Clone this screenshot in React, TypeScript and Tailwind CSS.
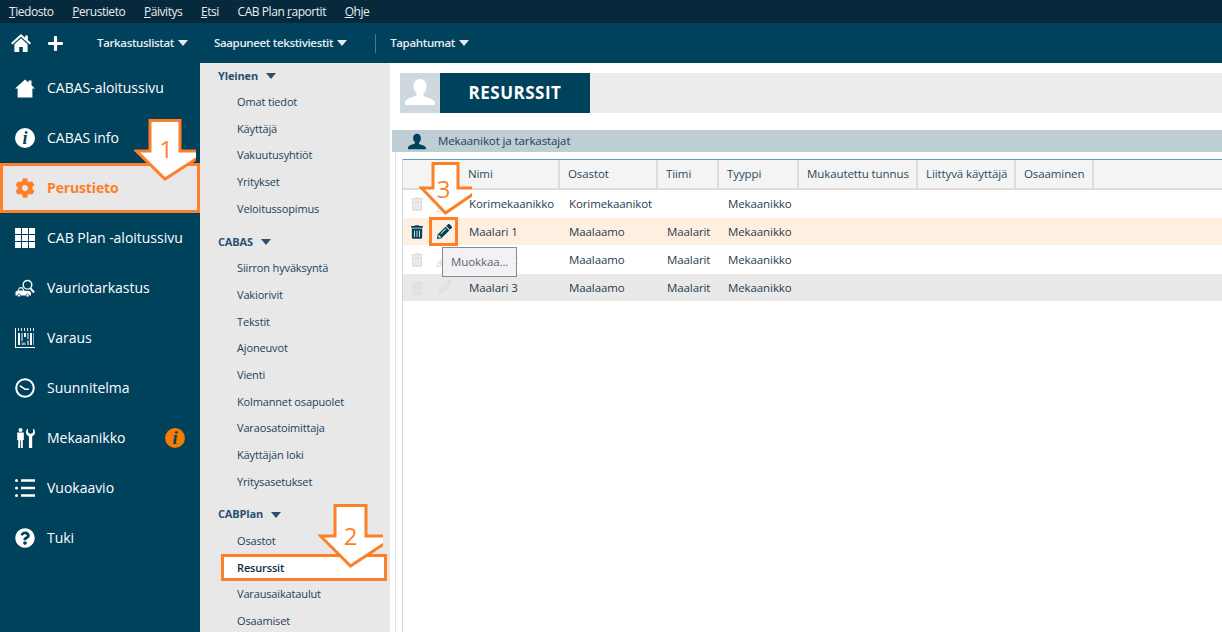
import React from "react";
import { FaPlus, FaCog, FaQuestionCircle, FaTrashAlt, FaPencilAlt } from "react-icons/fa";

const Caret = ({ className = "" }: { className?: string }) => (
  <svg viewBox="0 0 10 6" className={`w-[10px] h-[6px] ${className}`} fill="currentColor"><path d="M0 0h10L5 6z" /></svg>
);

const HomeRoof = ({ className = "" }: { className?: string }) => (
  <svg viewBox="0 0 20 18" className={className} fill="currentColor">
    <path d="M10 0 20 9l-1.300 1.500L10 2.800 1.300 10.500 0 9l3.200-2.900V1.500h2.600v2.300z" transform="matrix(-1 0 0 1 20 0)" />
    <path d="M10 4.300 3.400 10.200V18h4.800v-5h3.600v5h4.800v-7.800z" />
  </svg>
);

const HomeSolid = ({ className = "" }: { className?: string }) => (
  <svg viewBox="0 0 20 18" className={className} fill="currentColor">
    <path d="M10 0 13.500 3V1h3v4.800L20 9h-2.600v9H2.600V9H0z" />
  </svg>
);

const UserShape = ({ className = "" }: { className?: string }) => (
  <svg viewBox="0 0 30 26" className={className} fill="currentColor">
    <path d="M15 0c4 0 6.500 3 6.500 7.500 0 3-1.300 5.500-3 7v2.500c3 1.500 11.500 3 11.500 7V26H0v-2.500c0-4 8.500-5.500 11.500-7v-2.500c-1.700-1.500-3-4-3-7C8.500 3 11 0 15 0z" />
  </svg>
);

const Grid3 = () => (
  <svg viewBox="0 0 20 20" className="h-5 w-5" fill="currentColor">
    <path d="M0 0h6v6H0zM7 0h6v6H7zM14 0h6v6h-6zM0 7h6v6H0zM7 7h6v6H7zM14 7h6v6h-6zM0 14h6v6H0zM7 14h6v6H7zM14 14h6v6h-6z" />
  </svg>
);

const InfoDot = ({ bg, fg }: { bg: string; fg: string }) => (
  <span className={`flex h-5 w-5 items-center justify-center rounded-full ${bg} ${fg} font-['Liberation_Serif',serif] text-[18px] font-bold italic leading-none`}>i</span>
);

const Car = () => (
  <svg viewBox="0 0 20 20" className="h-5 w-5" fill="none" stroke="currentColor">
    <circle cx="12.500" cy="6.800" r="4.300" strokeWidth="1.400" />
    <path d="M15.500 10.300l3.600 4.200" strokeWidth="2" />
    <path d="M0.500 17.500v-3.800l2-1 1.800-3.500h3.400l1.700 3.500 5 .4 1.600 1.400v3z" fill="currentColor" stroke="none" />
    <path d="M4.700 10.500h2.400l1 2H3.700z" fill="#00415c" stroke="none" />
    <circle cx="4" cy="17.500" r="1.500" fill="currentColor" stroke="#00415c" strokeWidth=".6" />
    <circle cx="12.500" cy="17.500" r="1.500" fill="currentColor" stroke="#00415c" strokeWidth=".6" />
  </svg>
);

const Barcode = () => (
  <svg viewBox="0 0 20 20" className="h-5 w-5" fill="currentColor">
    <path d="M0 0h1v19h19v1H0z" />
    <path d="M3 0h1v3H3zM6 0h1v3H6zM9 0h1v3H9zM12 0h1v3h-1zM15 0h1v3h-1zM18 0h1v3h-1z" opacity=".9" />
    <path d="M3 5h2v12H3zM6.500 5h1v8h-1zM9 5h2v4H9zM12.500 5h1v6h-1zM15 5h2v12h-2z" />
    <path d="M6.500 14.500h4v2.500h-4zM12 12.500h2v4.500h-2zM18 5h1v12h-1z" opacity=".55" />
  </svg>
);

const Clock = () => (
  <svg viewBox="0 0 20 20" className="h-5 w-5" fill="none" stroke="currentColor" strokeWidth="2">
    <circle cx="10" cy="10" r="8.800" />
    <path d="M4.800 7.600 10 11.200h4" strokeWidth="1.600" />
  </svg>
);

const Mech = () => (
  <svg viewBox="0 0 20 20" className="h-5 w-5" fill="currentColor">
    <circle cx="5.500" cy="2" r="2" />
    <path d="M2.200 4.600h6.600v7.400H7.800v8H5.900v-7.400h-.8V20H3.200v-8h-1z" />
    <path d="M13 .5v4l2.500 1.500L18 4.500v-4c1.300.8 2 2.200 2 3.800 0 1.800-1 3.300-2.800 4V19a1.500 1.500 0 0 1-3.300 0V8.300C12 7.600 11 6.100 11 4.300c0-1.600.7-3 2-3.800z" />
  </svg>
);

const ListIcon = () => (
  <svg viewBox="0 0 20 20" className="h-5 w-5" fill="currentColor">
    <circle cx="1.500" cy="2.500" r="1.500" /><circle cx="1.500" cy="10" r="1.500" /><circle cx="1.500" cy="17.500" r="1.500" />
    <path d="M6 1.300h14v2.400H6zM6 8.800h14v2.400H6zM6 16.300h14v2.400H6z" />
  </svg>
);

const navItems: { label: string; icon: React.ReactNode; active?: boolean; badge?: boolean }[] = [
  { label: "CABAS-aloitussivu", icon: <HomeSolid className="h-[19px] w-5" /> },
  { label: "CABAS info", icon: <InfoDot bg="bg-white" fg="text-[#00415c]" /> },
  { label: "Perustieto", icon: <FaCog className="h-5 w-5" />, active: true },
  { label: "CAB Plan -aloitussivu", icon: <Grid3 /> },
  { label: "Vauriotarkastus", icon: <Car /> },
  { label: "Varaus", icon: <Barcode /> },
  { label: "Suunnitelma", icon: <Clock /> },
  { label: "Mekaanikko", icon: <Mech />, badge: true },
  { label: "Vuokaavio", icon: <ListIcon /> },
  { label: "Tuki", icon: <FaQuestionCircle className="h-5 w-5" /> },
];

const subGroups: { title: string; gap: string; items: string[] }[] = [
  { title: "Yleinen", gap: "", items: ["Omat tiedot", "Käyttäjä", "Vakuutusyhtiöt", "Yritykset", "Veloitussopimus"] },
  { title: "CABAS", gap: "mt-[11.7px]", items: ["Siirron hyväksyntä", "Vakiorivit", "Tekstit", "Ajoneuvot", "Vienti", "Kolmannet osapuolet", "Varaosatoimittaja", "Käyttäjän loki", "Yritysasetukset"] },
  { title: "CABPlan", gap: "mt-[11.3px]", items: ["Osastot", "Resurssit", "Varausaikataulut", "Osaamiset"] },
];

const cols = "grid grid-cols-[57px_100px_98px_61px_80px_119px_98px_78px_1fr]";
const headers = ["Nimi", "Osastot", "Tiimi", "Tyyppi", "Mukautettu tunnus", "Liittyvä käyttäjä", "Osaaminen"];
const rows = [
  { n: "Korimekaanikko", o: "Korimekaanikot", t: "", bg: "bg-white h-[28px]", on: false },
  { n: "Maalari 1", o: "Maalaamo", t: "Maalarit", bg: "bg-[#ffefe0] h-[27px]", on: true },
  { n: "Maalari 2", o: "Maalaamo", t: "Maalarit", bg: "bg-white h-[29px]", on: false },
  { n: "Maalari 3", o: "Maalaamo", t: "Maalarit", bg: "bg-[#e9e9e9] h-[27px]", on: false },
];

const Arrow = ({ n, className, w, h, shaft, shoulder, numTop, numLeft = 0 }: { n: string; className: string; w: number; h: number; shaft: number; shoulder: number; numTop: number; numLeft?: number }) => {
  const c = w / 2;
  const s = shaft / 2 - 1.5;
  return (
    <div className={`absolute ${className}`}>
      <svg width={w} height={h} viewBox={`0 0 ${w} ${h}`}>
        <path
          d={`M${c - s} 1.500h${2 * s}V${shoulder}h${c - 2.500}L${c} ${h - 2}L2.500 ${shoulder}H${c - s}z`}
          fill="#fff"
          stroke="#fd7f28"
          strokeWidth="3"
        />
      </svg>
      <span className="absolute w-full text-center font-['Open_Sans',sans-serif] text-[24px] leading-[32px] text-[#fd7f28]" style={{ top: numTop, left: numLeft }}>{n}</span>
    </div>
  );
};

export default function App() {
  return (
    <div className="relative h-[632px] w-[1222px] overflow-hidden bg-white font-['Open_Sans','Noto_Sans',sans-serif]">
      {/* top menu */}
      <div className="flex h-[23px] items-center gap-[18.7px] border-t border-[#0b2c3f] bg-[#07293c] pl-[9px] text-[12px] tracking-[-0.45px] text-[#e8eef1]">
        <span><u>T</u>iedosto</span>
        <span><u>P</u>erustieto</span>
        <span><u>P</u>äivitys</span>
        <span><u>E</u>tsi</span>
        <span>CAB Plan <u>r</u>aportit</span>
        <span><u>O</u>hje</span>
      </div>
      {/* toolbar */}
      <div className="flex h-[40px] items-center bg-[#00415c] text-[11.5px] font-semibold tracking-[-0.35px] text-[#e6edf0]">
        <HomeRoof className="ml-[11px] h-[18px] w-5 text-white" />
        <FaPlus className="ml-[16px] h-[17px] w-[17px] text-white" />
        <span className="ml-[33px]">Tarkastuslistat</span>
        <Caret className="ml-[4px]" />
        <span className="ml-[26px]">Saapuneet tekstiviestit</span>
        <Caret className="ml-[4px]" />
        <span className="ml-[28px] h-[19px] w-px bg-[#4b7a8e]" />
        <span className="ml-[14px]">Tapahtumat</span>
        <Caret className="ml-[4px]" />
      </div>
      <div className="flex h-[569px]">
        {/* sidebar */}
        <nav className="w-[200px] shrink-0 bg-[#00415c] text-[14px] text-white">
          {navItems.map((it) => (
            <div
              key={it.label}
              className={`flex h-[50px] items-center ${it.active ? "border-[3px] border-[#fd7f28] bg-[#e8e8e8] pl-[12px] font-bold tracking-[-0.15px] text-[#fd7f28]" : "pl-[15px] tracking-[-0.02px]"}`}
            >
              <span className="flex w-5 justify-center">{it.icon}</span>
              <span className="mb-[2px] ml-[12px]">{it.label}</span>
              {it.badge && (
                <span className="ml-auto mr-[15px]"><InfoDot bg="bg-[#f57c00]" fg="text-[#00415c]" /></span>
              )}
            </div>
          ))}
        </nav>
        {/* sub menu */}
        <aside className="w-[190px] shrink-0 bg-[#e8e8e8] pl-[18px] pt-[5px] text-[11px] tracking-[-0.15px] text-[#1f4257]">
          {subGroups.map((g) => (
            <div key={g.title} className={g.gap}>
              <div className="flex h-[16px] items-center font-bold text-[#2c4f70]">
                {g.title}
                <Caret className="ml-[8px]" />
              </div>
              <div className="mt-[5px]">
                {g.items.map((s) =>
                  s === "Resurssit" ? (
                    <div key={s} className="ml-[3px] mr-[3px] flex h-[26.7px] items-center border-[3px] border-[#fd7f28] bg-white pl-[13px] pt-[1px] font-semibold text-[#0c2f44]">
                      {s}
                    </div>
                  ) : (
                    <div key={s} className="flex h-[26.7px] items-center pl-[19px]">{s}</div>
                  )
                )}
              </div>
            </div>
          ))}
        </aside>
        {/* main */}
        <main className="min-w-0 flex-1 pt-[10px]">
          <div className="ml-[10px] flex h-[40px] bg-[#ededed]">
            <div className="flex w-[40px] items-end justify-center bg-[#cdd9df] pb-[8px]">
              <UserShape className="h-[26px] w-[30px] text-white" />
            </div>
            <div className="flex w-[150px] items-center justify-center bg-[#00415c] text-[17px] font-bold tracking-[0.5px] text-white">RESURSSIT</div>
          </div>
          <div className="ml-[2px] mt-[17px] flex h-[22px] items-center bg-[#bfcdd4] pl-[16px] text-[11.5px] tracking-[-0.1px] text-[#24404f]">
            <UserShape className="h-[17px] w-[18px] text-[#00415c]" />
            <span className="ml-[12px]">Mekaanikot ja tarkastajat</span>
          </div>
          <div className="ml-[5px] h-[480px] border-l border-[#dce6ea] pl-[6px] pt-[7px]">
            <div className="h-full border-l border-t border-l-[#c5dcec] border-t-[#6a9bc0] text-[11.5px] tracking-[-0.1px] text-[#1f3c4e]">
              <div className={`${cols} h-[30px] items-center border-b-2 border-[#dcdcdc] bg-[#f4f4f4] text-[#2a4a5e]`}>
                <span />
                {headers.map((h) => (
                  <span key={h} className="flex h-full items-center border-r-2 border-[#dcdcdc] pl-[8px]">{h}</span>
                ))}
                <span />
              </div>
              {rows.map((r) => (
                <div key={r.n} className={`${cols} items-center ${r.bg}`}>
                  <span className="flex items-center pl-[8px]">
                    <FaTrashAlt className={`h-[14px] w-[12px] ${r.on ? "text-[#00415c]" : "text-[#e0e0e0]"}`} />
                    <FaPencilAlt className={`ml-[14px] h-[15px] w-[15px] ${r.on ? "text-[#00415c]" : "text-[#e0e0e0]"}`} />
                  </span>
                  <span className="pl-[9px]">{r.n}</span>
                  <span className="pl-[9px]">{r.o}</span>
                  <span className="pl-[9px]">{r.t}</span>
                  <span className="pl-[9px]">Mekaanikko</span>
                </div>
              ))}
            </div>
          </div>
        </main>
      </div>
      {/* overlays */}
      <Arrow n="1" className="left-[134px] top-[119px]" w={62} h={62} shaft={33} shoulder={32} numTop={14} numLeft={1} />
      <Arrow n="2" className="left-[318px] top-[504px]" w={65} h={64} shaft={34} shoulder={32} numTop={16} />
      <div className="absolute left-[429px] top-[217px] h-[29px] w-[29px] border-[3px] border-[#fd7f28]" />
      <Arrow n="3" className="left-[419px] top-[162px]" w={53} h={53} shaft={28} shoulder={26} numTop={11} numLeft={-2} />
      <div className="absolute left-[442px] top-[247px] flex h-[30px] w-[75px] items-center border border-[#8a8a8a] bg-[#f1f1f6] pl-[8px] font-['Open_Sans',sans-serif] text-[11.5px] tracking-[-0.1px] text-[#5a6670]">Muokkaa...</div>
    </div>
  );
}
